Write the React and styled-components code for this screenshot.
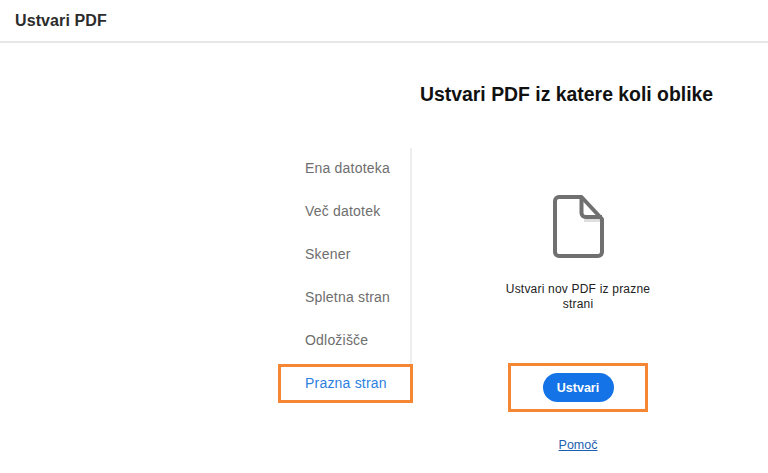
import React from 'react';
import styled, { createGlobalStyle } from 'styled-components';

const GlobalStyle = createGlobalStyle`
  html, body {
    margin: 0;
    padding: 0;
    background: #fff;
    font-family: "Liberation Sans", Arial, sans-serif;
  }
`;

const Page = styled.div`
  width: 768px;
  height: 473px;
  overflow: hidden;
  display: flex;
  flex-direction: column;
`;

const Header = styled.header`
  height: 41px;
  flex-shrink: 0;
  padding-left: 15px;
  display: flex;
  align-items: center;
  border-bottom: 2px solid #e6e6e6;
  font-size: 16px;
  letter-spacing: 0.1px;
  font-weight: bold;
  color: #2c2c2c;
`;

const Title = styled.h1`
  margin: 38px 0 0 420px;
  height: 26px;
  font-size: 19.4px;
  line-height: 26px;
  font-weight: bold;
  color: #111;
  white-space: nowrap;
`;

const Body = styled.div`
  margin: 41px 0 0 278px;
  display: flex;
  align-items: flex-start;
`;

const Sidebar = styled.nav`
  width: 135px;
  display: flex;
  flex-direction: column;
`;

const SideList = styled.div`
  display: flex;
  flex-direction: column;
  height: 216px;
  width: 134px;
  border-right: 2px solid #eeeeee;
  box-sizing: border-box;
`;

const SideItem = styled.div`
  height: 43px;
  flex-shrink: 0;
  padding: 0 0 4px 27px;
  box-sizing: border-box;
  display: flex;
  align-items: center;
  font-size: 14px;
  letter-spacing: 0.2px;
  color: #6e6e6e;
`;

const ActiveItem = styled(SideItem)`
  height: 39px;
  padding: 0 0 1px 24px;
  border: 3px solid #f58634;
  color: #2d7fe0;
`;

const Panel = styled.section`
  width: 330px;
  display: flex;
  flex-direction: column;
  align-items: center;
`;

const FileIcon = styled.svg`
  display: block;
  width: 51px;
  height: 63px;
  margin-top: 47px;
`;

const Description = styled.p`
  width: 160px;
  margin: 24px 0 0;
  font-size: 12px;
  line-height: 15px;
  letter-spacing: 0.2px;
  text-align: center;
  color: #222;
`;

const ActionBox = styled.div`
  width: 140px;
  height: 49px;
  margin-top: 51px;
  border: 3px solid #f58634;
  box-sizing: border-box;
  display: flex;
  align-items: center;
  justify-content: center;
`;

const CreateButton = styled.button`
  width: 71px;
  height: 29px;
  padding: 0;
  border: 0;
  border-radius: 15px;
  background: #1473e6;
  color: #fff;
  font-family: inherit;
  font-size: 12.5px;
  font-weight: bold;
`;

const HelpLink = styled.a`
  margin-top: 26px;
  font-size: 12.5px;
  line-height: 15px;
  color: #1d5fae;
  text-decoration: underline;
`;

const sideItems = ['Ena datoteka', 'Več datotek', 'Skener', 'Spletna stran', 'Odložišče'];

const App = () => {
  return (
    <Page>
      <GlobalStyle />
      <Header>Ustvari PDF</Header>
      <Title>Ustvari PDF iz katere koli oblike</Title>
      <Body>
        <Sidebar>
          <SideList>
            {sideItems.map((item) => (
              <SideItem key={item}>{item}</SideItem>
            ))}
          </SideList>
          <ActiveItem>Prazna stran</ActiveItem>
        </Sidebar>
        <Panel>
          <FileIcon viewBox="0 0 51 63" fill="none">
            <path d="M31 25.5h18" stroke="#dedede" strokeWidth="3" />
            <path
              d="M6 2h22.5L49 24v33a4 4 0 0 1-4 4H6a4 4 0 0 1-4-4V6a4 4 0 0 1 4-4z"
              stroke="#707070"
              strokeWidth="4"
              strokeLinejoin="round"
            />
            <path d="M28.5 2v16a4 4 0 0 0 4 4H49" stroke="#707070" strokeWidth="4" strokeLinejoin="round" />
          </FileIcon>
          <Description>Ustvari nov PDF iz prazne strani</Description>
          <ActionBox>
            <CreateButton>Ustvari</CreateButton>
          </ActionBox>
          <HelpLink href="#">Pomoč</HelpLink>
        </Panel>
      </Body>
    </Page>
  );
};

export default App;
